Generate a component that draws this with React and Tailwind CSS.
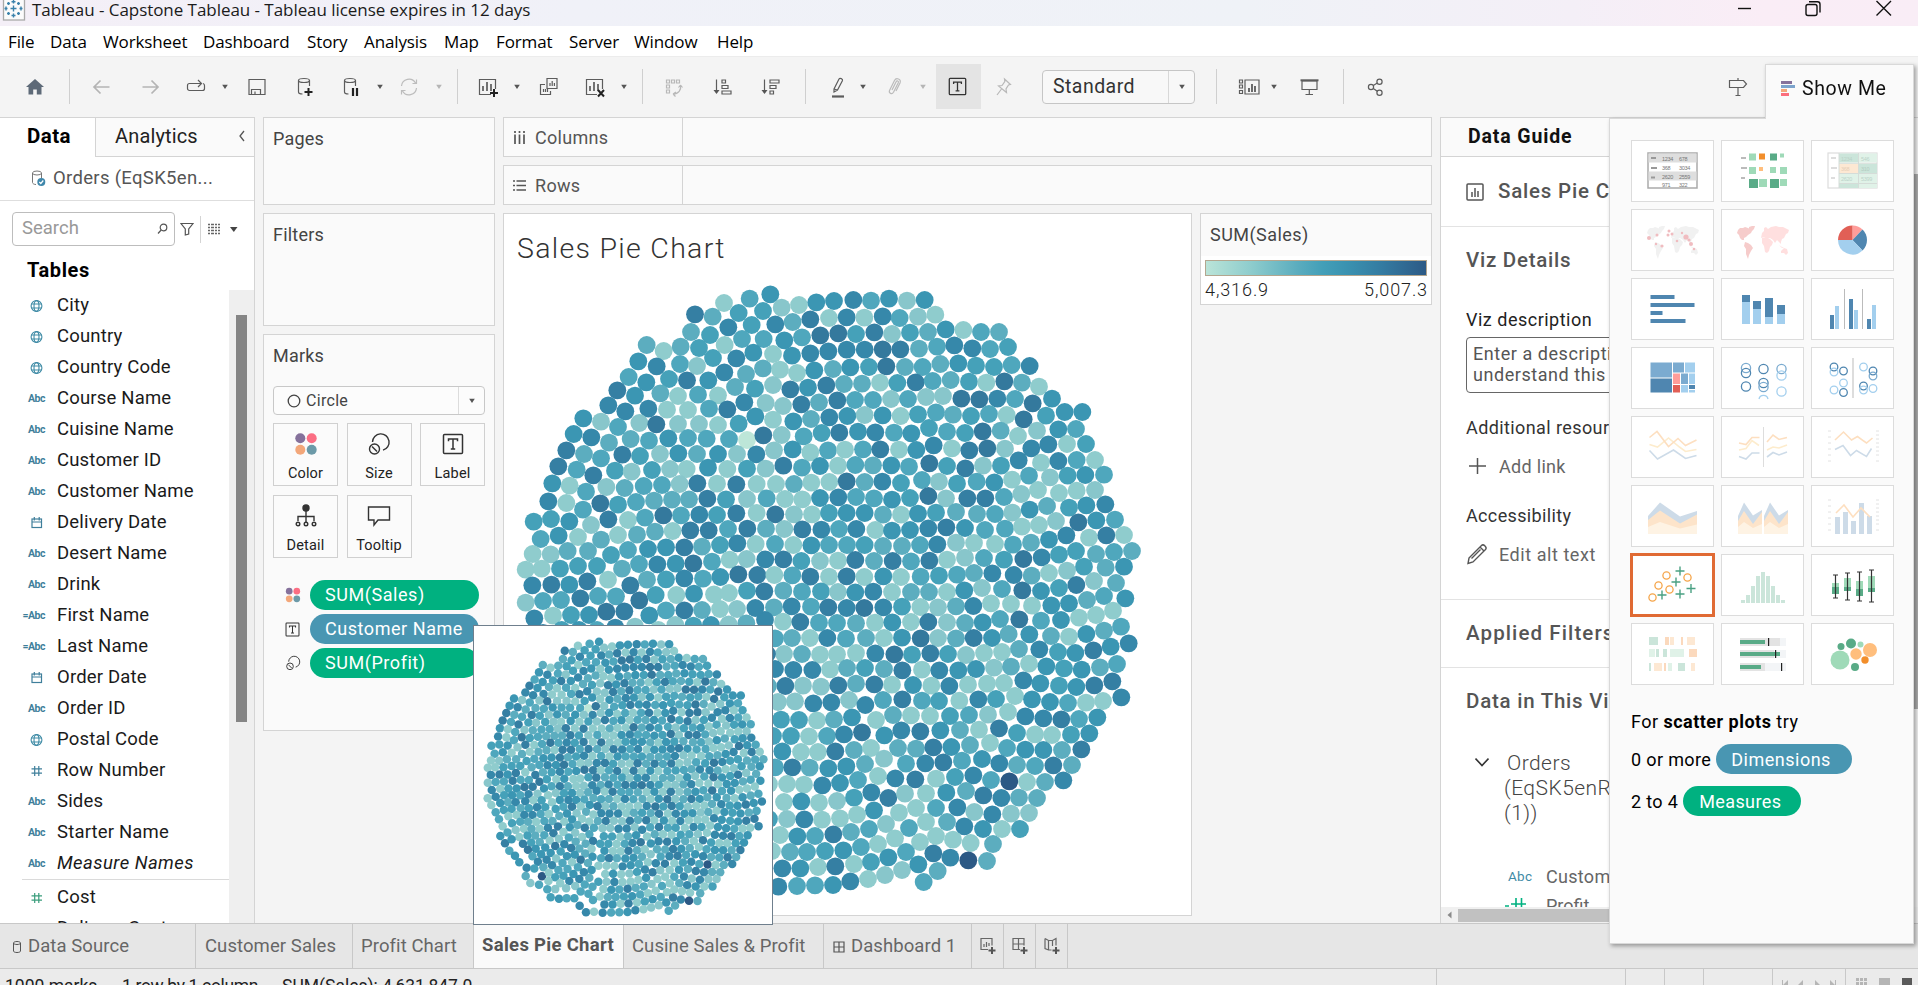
import React from "react";

/* ---------- chart data ---------- */

const PALETTE = {
  a: "#8fcccd", b: "#88c6cb", c: "#5cadbf", d: "#4fa7bd", e: "#45a1b9",
  f: "#3b96b3", h: "#3688aa", i: "#357fa3", j: "#34799d", k: "#2c5985", l: "#bde6d8",
};

const NW = `811,73,f;749,86,d;672,99,a;585,133,i;638,140,c;716,129,e;789,123,e;845,113,b;897,105,a;949,97,f;573,186,c;630,195,e;685,172,h;755,165,e;826,163,h;878,156,c;931,148,i;987,144,a;440,225,c;491,243,a;542,230,c;597,234,e;674,225,a;726,207,d;791,207,d;853,211,f;906,202,d;961,196,j;415,274,f;470,289,h;540,282,d;591,288,b;639,264,e;709,265,h;760,248,f;819,252,a;876,257,f;931,250,h;386,321,d;439,337,f;507,327,e;561,331,i;625,331,f;673,307,h;738,312,c;789,295,c;840,299,a;891,309,a;943,301,f;352,361,i;405,377,f;481,370,c;534,378,a;594,374,d;654,376,a;705,351,c;765,356,e;819,345,b;871,358,i;924,353,f;325,406,h;376,424,h;445,416,h;501,419,a;564,420,a;627,416,d;682,418,i;733,397,h;797,399,b;849,408,b;904,403,i;957,397,c;250,445,f;303,455,b;354,471,d;418,459,b;469,463,j;534,462,b;597,462,b;654,465,a;716,461,e;766,439,f;819,449,a;880,454,f;933,447,c;221,492,f;274,502,h;327,518,c;392,507,c;447,512,d;505,505,f;564,504,d;620,506,d;687,507,d;741,510,l;790,496,j;845,495,b;911,499,d;199,541,i;252,552,c;303,565,d;367,554,i;420,558,e;480,552,b;535,550,f;591,552,c;654,552,f;711,552,b;769,553,h;822,541,b;878,538,f;931,547,a;175,589,i;230,599,d;280,616,i;345,602,e;395,605,b;456,600,e;510,597,b;560,597,a;624,593,f;682,597,a;741,596,e;797,596,b;850,587,i;906,593,d;157,640,f;209,647,a;258,665,d;319,651,b;374,654,c;431,648,d;486,645,d;539,642,b;592,640,i;651,641,a;709,643,i;770,642,a;828,642,a;882,642,c;934,638,a;145,694,h;199,699,a;249,719,d;301,700,j;354,704,e;408,696,d;462,692,c;516,689,c;567,688,c;622,686,i;678,688,e;741,687,b;800,685,d;855,687,a;907,688,a;101,755,e;153,747,e;208,754,f;273,765,b;325,748,i;384,750,a;435,743,d;490,736,j;543,736,d;598,734,h;651,735,e;709,730,i;770,729,a;826,733,j;882,733,b;936,733,a;122,807,d;176,797,f;234,801,a;303,809,c;354,795,a;411,794,c;465,785,c;518,783,a;571,781,i;626,781,i;684,777,d;742,776,i;798,776,c;853,777,b;907,778,i;98,852,a;152,853,b;203,843,c;264,843,c;333,855,e;384,840,d;444,837,f;498,832,f;553,832,i;606,830,c;660,825,e;712,820,h;767,822,a;825,822,d;880,825,a;934,826,f;77,899,a;125,896,a;180,896,e;234,888,e;291,888,e;366,896,c;417,882,d;472,883,h;527,881,f;580,880,j;636,875,d;689,869,a;740,867,b;796,868,h;850,868,i;904,873,e;97,946,h;154,944,i;208,944,f;262,934,i;324,929,a;391,946,i;441,929,c;498,928,e;553,925,h;609,926,d;661,921,f;715,913,j;772,915,i;823,915,a;877,916,d;931,920,i;77,998,b;129,993,d;183,990,d;241,985,i;294,978,d;348,979,d;418,991,j;467,975,e;529,975,a;582,971,f;642,973,a;687,969,a;741,962,e;793,964,i;850,962,c;906,965,d`;

const NE = `42,93,f;100,90,h;153,92,d;207,86,f;261,92,b;314,90,f;27,143,a;80,142,h;133,143,a;188,139,h;239,144,d;294,140,b;346,134,a;0,196,j;55,190,j;108,192,e;163,187,i;216,192,b;270,188,e;324,186,c;377,178,f;430,180,a;483,186,d;537,186,c;25,244,h;80,239,h;134,239,h;188,238,j;241,238,i;297,236,c;351,230,d;403,226,h;457,235,h;510,237,d;564,231,e;39,297,c;91,292,f;147,291,e;199,289,j;255,291,c;308,291,d;361,282,c;415,280,f;468,287,e;522,291,e;575,285,d;629,288,h;19,346,i;72,342,c;126,341,c;180,338,a;232,339,e;287,337,i;338,333,d;392,330,c;447,335,e;499,338,a;553,334,j;606,338,c;657,350,a;52,391,i;105,390,d;159,390,d;213,387,b;264,387,d;318,381,b;369,378,b;424,386,j;478,388,j;532,386,h;585,387,d;638,400,j;696,386,f;28,442,h;82,438,f;134,435,b;188,436,f;242,438,a;294,433,e;348,427,d;399,434,c;453,438,e;507,432,d;560,435,a;611,448,j;678,437,e;734,426,f;787,426,f;5,489,e;58,488,i;114,485,f;166,487,h;222,488,d;274,490,f;327,474,e;381,485,d;435,489,e;488,484,j;542,482,c;594,498,a;651,482,b;715,478,f;768,477,d;24,541,d;75,539,a;129,538,d;181,538,i;237,539,a;289,540,f;341,526,h;396,535,a;448,541,i;502,535,j;555,536,b;634,535,h;685,523,h;741,522,a;798,522,e;0,588,f;54,587,a;106,585,d;159,586,c;214,586,f;267,590,d;328,580,j;381,588,e;436,595,i;489,587,b;543,587,e;596,571,h;663,578,a;715,573,h;770,570,d;825,570,a;28,636,a;80,634,j;134,636,c;187,635,h;243,639,e;306,630,d;357,635,b;411,641,e;470,635,d;523,637,f;576,629,a;627,617,d;690,622,b;743,617,e;796,615,f;852,614,d;0,684,f;55,682,h;108,681,d;162,685,d;216,689,f;270,684,e;325,678,j;378,685,b;442,685,i;496,685,i;552,681,d;604,672,b;654,660,a;717,669,a;770,662,a;825,660,b;27,729,e;80,729,f;134,729,f;189,734,c;243,734,a;294,731,f;348,728,e;408,726,c;471,732,c;525,732,d;577,728,b;629,719,f;681,708,c;747,713,e;799,706,f;856,703,h;4,779,h;57,777,d;109,777,h;166,780,a;216,782,f;270,780,f;325,775,h;379,772,i;435,774,f;495,780,d;555,776,d;606,770,a;657,765,a;708,753,b;775,757,j;829,751,f;885,749,d;27,825,d;81,825,d;134,825,e;189,828,c;246,828,c;300,825,d;352,823,h;408,818,b;462,819,a;525,822,a;579,824,d;633,818,c;687,809,f;739,796,h;807,803,a;859,796,i;912,795,a;0,873,b;54,872,a;106,870,i;162,873,c;218,873,i;273,874,d;328,872,i;381,869,a;435,863,b;492,864,d;552,869,e;610,867,j;665,862,h;717,854,e;768,843,e;828,852,c;882,846,d;936,843,c;27,920,a;80,919,i;133,921,a;190,919,f;243,921,a;302,920,d;357,917,e;411,914,d;462,909,c;517,910,h;581,915,h;635,917,c;687,909,a;741,902,b;792,890,e;857,893,c;912,890,f;3,964,e;54,966,b;106,967,f;160,965,h;216,966,a;273,966,c;327,966,c;381,966,a;433,961,f;486,954,b;546,957,d;607,961,j;663,963,f;717,954,e;769,945,i;822,933,b;888,939,c`;

const SE = `27,52,c;80,49,h;138,50,d;190,52,i;245,54,h;298,54,j;355,52,h;411,50,e;466,51,a;519,52,b;573,49,c;625,48,h;678,40,a;738,42,a;801,47,a;859,46,f;912,40,f;966,30,c;1017,18,d;1081,25,f;0,90,h;54,95,a;106,96,i;162,98,d;216,99,d;273,100,c;330,98,a;382,97,f;438,96,a;490,96,i;546,97,b;600,99,c;653,97,f;705,87,d;763,88,j;828,92,d;888,90,f;942,83,a;993,75,a;1044,62,a;30,145,d;81,144,c;135,144,a;187,144,h;243,146,d;303,144,c;357,144,a;411,143,f;467,145,j;519,144,b;573,145,c;626,144,i;681,144,f;731,132,c;793,133,f;858,138,c;912,140,a;964,132,f;1017,122,c;1068,110,d;57,192,b;111,192,c;165,194,a;216,193,a;273,189,a;331,190,h;388,193,j;441,194,e;496,190,i;549,192,e;603,195,b;657,189,a;711,186,a;762,177,c;823,178,h;879,186,e;931,189,f;985,181,i;1037,170,f;1091,160,h;30,237,h;85,240,h;142,240,h;195,238,a;246,234,c;300,234,e;357,237,c;412,241,i;471,239,a;523,241,h;580,241,f;633,237,f;687,233,b;738,230,c;792,221,a;844,229,f;897,235,e;950,239,f;1005,232,c;1056,222,d;61,288,i;114,287,b;168,290,b;220,286,i;273,281,c;328,283,i;381,284,a;444,285,f;499,287,a;553,288,h;609,284,a;666,281,a;717,279,a;775,271,h;826,280,f;882,287,e;934,291,f;988,286,i;1042,274,i;39,336,b;90,334,b;145,340,h;199,337,h;252,330,b;301,345,h;354,330,d;412,328,i;471,332,d;522,333,e;583,332,a;640,328,h;693,327,e;750,318,a;801,328,f;855,336,f;909,339,d;963,338,a;1014,333,a;1069,322,h;48,389,e;102,390,e;156,391,a;207,388,c;261,382,f;333,390,a;384,375,c;438,376,a;495,378,a;555,378,e;612,375,d;669,374,b;729,366,a;781,379,h;835,385,h;889,388,i;942,387,d;997,382,f;24,438,e;78,438,e;132,439,a;186,438,d;237,433,h;291,427,j;358,436,f;409,421,h;466,424,i;526,421,f;585,420,c;642,419,a;702,415,i;756,429,e;810,433,a;861,435,a;918,434,e;973,430,f;52,484,f;108,486,a;159,486,a;211,484,i;267,480,c;318,474,a;399,474,c;453,476,c;505,472,i;559,471,f;615,465,c;675,459,a;726,474,d;781,479,f;835,480,f;891,480,c;949,478,i;30,532,d;82,532,i;134,533,c;190,535,f;244,529,f;300,522,c;357,506,b;423,521,d;481,520,h;535,517,i;591,512,d;651,507,f;703,520,h;756,525,c;810,528,d;865,526,i;921,525,c;12,582,a;66,582,a;117,584,a;172,586,h;225,579,f;279,570,d;339,558,a;391,565,h;451,568,i;513,566,a;570,561,e;625,556,h;678,570,d;733,574,k;786,576,a;840,576,c;895,571,h;57,636,a;109,634,f;162,638,a;216,633,b;267,623,e;319,607,h;370,624,i;420,611,b;483,610,a;544,608,f;603,603,c;655,616,i;709,624,h;762,623,c;816,624,c;12,687,e;66,687,b;118,688,h;171,689,a;225,685,a;276,674,a;327,661,f;402,668,a;453,654,a;513,654,d;577,652,h;628,666,b;682,673,h;738,671,b;792,669,b;45,735,a;97,739,f;150,738,d;205,733,i;258,726,c;312,717,d;363,702,b;432,714,d;483,696,a;546,696,c;598,709,h;654,717,f;711,717,a;765,717,e;21,783,a;75,786,c;126,786,d;180,783,e;235,781,f;288,771,d;339,762,a;390,745,a;465,756,a;513,738,a;564,749,a;617,759,a;684,762,c;52,835,h;106,835,f;159,831,a;211,829,i;267,822,a;318,816,e;370,802,f;423,786,d;505,790,i;556,803,h;610,811,k;666,813,c;40,890,h;96,888,d;150,886,d;204,885,f;256,874,h;309,867,a;360,855,b;411,840,b;460,823,f;518,843,c;476,876,d`;

const W = `193,100,h;249,92,a;303,90,e;357,90,f;409,80,j;463,79,i;538,91,f;588,76,d;643,76,i;696,75,c;750,72,a;801,72,b;856,69,h;558,30,d;618,29,a;671,27,f;726,27,a;777,25,a;832,20,e;883,19,i;275,135,e;436,128,h;495,125,b;565,135,a;616,120,b;670,122,e;723,120,f;776,118,b;829,115,c;883,112,i`;

const SW_EDGE = `53,640,a;64,660,a;77,682,d;87,703,d;98,724,a;91,753,f;105,775,i;118,797,d;135,812,f;148,832,f;170,848,h;167,873,c;181,894,b;207,899,d;232,913,d;242,937,e;267,941,f;290,940,d;313,940,e;329,962,h;348,982,h;372,980,a`;

// Thumbnail scale and the point both views share.
const TX = 0.4545, TY = 0.4576, OX = 770.3, OY = 294.3, PX = 599, PY = 641.7;

const read = (s, ox, oy) =>
  s.split(";").map((p) => {
    const [x, y, c] = p.split(",");
    return [ox + x / 3, oy + y / 3, c];
  });

function buildMarks() {
  const marks = [];
  const free = (x, y, d) => {
    for (const m of marks) {
      const dx = m[0] - x, dy = m[1] - y;
      if (dx * dx + dy * dy < d * d) return false;
    }
    return true;
  };
  const add = (list, d) => list.forEach((m) => free(m[0], m[1], d) && marks.push(m));
  add(read(NW, 500, 270), 12);
  add(read(NE, 820, 270), 12);
  add(read(SE, 765, 590), 12);
  add(read(W, 470, 585), 12);
  const toMain = ([x, y, c]) => [OX + (x - PX) / TX, OY + (y - PY) / TY, c];
  const edge = read(SW_EDGE, 470, 585).map(toMain);
  add(edge, 12);
  add([[470 + 216 / 3, 585 + 874 / 3, "k"]].map(toMain), 12);
  const poly = [...edge, [780, 888], [800, 620], [540, 618]];
  const inside = (x, y) => {
    let r = false;
    for (let i = 0, j = poly.length - 1; i < poly.length; j = i++) {
      const [xi, yi] = poly[i], [xj, yj] = poly[j];
      if (yi > y !== yj > y && x < ((xj - xi) * (y - yi)) / (yj - yi) + xi) r = !r;
    }
    return r;
  };
  const mix = "aaababbcccddddeeeffffhhhiij";
  let seed = 11;
  for (let y = 618; y < 890; y += 1)
    for (let x = 520; x < 800; x += 1)
      if (inside(x, y) && free(x, y, 16.9)) {
        seed = (seed * 1103515245 + 12345) % 2147483648;
        marks.push([x, y, mix[Math.floor((seed / 2147483648) * mix.length)]]);
      }
  return marks;
}

const MARKS = buildMarks();

/* ---------- icons ---------- */

const Svg = ({ w = 30, h = 30, children, className = "" }) => (
  <svg width={w} height={h} viewBox={`0 0 ${w} ${h}`} fill="none" stroke="#5c5c5c" strokeWidth="1.2" className={"shrink-0 " + className}>
    {children}
  </svg>
);

const Caret = ({ className = "", fill = "#555" }) => (
  <svg width="8" height="6" viewBox="0 0 8 6" className={"shrink-0 " + className}>
    <path d="M1.2 .8h5.6L4 4.900z" fill={fill} />
  </svg>
);

const Sep = ({ className = "" }) => <div className={"h-[35px] w-px shrink-0 bg-[#cfcfcf] " + className} />;

const Cylinder = () => (
  <>
    <ellipse cx="14" cy="8.5" rx="5.5" ry="2" />
    <path d="M8.500 8.500V20c0 1.300 1.500 2 4 2M19.500 8.500V14" />
  </>
);

const Dots = ({ s = 24 }) => (
  <svg width={s} height={s} viewBox="0 0 24 24" className="shrink-0">
    <circle cx="6.300" cy="6.300" r="5" fill="#85719b" />
    <circle cx="17.700" cy="6.300" r="5" fill="#fb6e83" />
    <circle cx="6.300" cy="17.700" r="5" fill="#f3a77a" />
    <circle cx="17.700" cy="17.700" r="5" fill="#6c9aa8" />
  </svg>
);

const SizeIcon = ({ s = 24 }) => (
  <svg width={s} height={s} viewBox="0 0 24 24" fill="none" stroke="#333" strokeWidth="1.400" className="shrink-0">
    <path d="M5.500 10A8.300 8.300 0 1 1 16 18.200" />
    <circle cx="7.500" cy="17" r="5" />
    <path d="M5 14.500l5 5" />
  </svg>
);

const LabelIcon = ({ s = 22 }) => (
  <svg width={s} height={s} viewBox="0 0 22 22" fill="none" stroke="#333" strokeWidth="1.500" className="shrink-0">
    <rect x="1.500" y="1.500" width="19" height="19" rx="1" />
    <path d="M6.500 8.200V6h9v2.200M11 6v10M8.800 16h4.400" />
  </svg>
);

const FieldIcon = ({ kind }) => {
  if (kind === "abc" || kind === "=abc")
    return (
      <span className="flex w-[19px] shrink-0 justify-end text-[10.500px] font-bold tracking-[-0.500px] text-[#3f7f9b]">
        {kind === "abc" ? "Abc" : "=Abc"}
      </span>
    );
  if (kind === "geo")
    return (
      <svg width="19" height="14" viewBox="0 0 19 14" fill="none" stroke="#3f8ba6" strokeWidth="1.1" className="shrink-0">
        <circle cx="10.500" cy="7" r="5.400" />
        <ellipse cx="10.500" cy="7" rx="2.500" ry="5.400" />
        <path d="M5.600 5h9.800M5.600 9h9.800" />
      </svg>
    );
  if (kind === "date")
    return (
      <svg width="19" height="14" viewBox="0 0 19 14" fill="none" stroke="#3f7f9b" strokeWidth="1.2" className="shrink-0">
        <rect x="6" y="3" width="9.500" height="8.500" />
        <path d="M6 6h9.500M8.300 1v3.500M13.200 1v3.500" />
      </svg>
    );
  return (
    <svg width="19" height="14" viewBox="0 0 19 14" fill="none" stroke={kind === "num" ? "#3f7f9b" : "#3a9d7c"} strokeWidth="1.2" className="shrink-0">
      <path d="M5.500 4.800H16M5.500 9.200H16M8.700 2v10M12.800 2v10" />
    </svg>
  );
};

/* ---------- top bars ---------- */

const TitleBar = () => (
  <div className="flex h-[26px] items-start bg-[linear-gradient(90deg,#f4eff7_0%,#f0f1f8_30%,#eff2f7_65%,#f4eff7_82%,#faedf6_92%,#f9edf6_100%)]">
    <svg width="26" height="22" viewBox="0 0 26 22" className="shrink-0">
      <rect x="3.500" y="-6" width="21" height="26" fill="#fbfbfb" stroke="#a9a9a9" strokeWidth="1.300" />
      <g stroke="#3b82ab" strokeWidth="1.400">
        <path d="M13.500 5.500v6M10.500 8.500h6M13.500 0v3.500M11.500 1.800h4M13.500 13.500v4M11.500 15.500h4M6 6.500v4M4.500 8.500h3M21 6.500v4M19.500 8.500h3M8.500 2v3M7 3.500h3M18.500 2v3M17 3.500h3M8.500 12v3M7 13.500h3M18.500 12v3M17 13.500h3" />
      </g>
    </svg>
    <div className="ml-[6px] font-['Open_Sans','Noto_Sans',sans-serif] text-[17px] leading-5 tracking-[-0.050px] text-[#1b1b1b]">
      Tableau - Capstone Tableau - Tableau license expires in 12 days
    </div>
    <svg width="180" height="22" viewBox="0 0 180 22" fill="none" stroke="#111" strokeWidth="1.400" className="ml-auto shrink-0">
      <path d="M-2 8.500H13" />
      <rect x="68" y="4.500" width="11" height="11" rx="2" />
      <path d="M71 1.700h8.500a2.500 2.500 0 0 1 2.500 2.500V12.500" />
      <path d="M138.500 1l14.500 14.500M153 1l-14.500 14.500" />
    </svg>
  </div>
);

const MENU = [
  ["File", "w-[42px]"], ["Data", "w-[53px]"], ["Worksheet", "w-[100px]"], ["Dashboard", "w-[104px]"],
  ["Story", "w-[57px]"], ["Analysis", "w-[80px]"], ["Map", "w-[52px]"], ["Format", "w-[73px]"],
  ["Server", "w-[65px]"], ["Window", "w-[83px]"], ["Help", "w-[50px]"],
];

const MenuBar = () => (
  <div className="flex h-[30px] items-center bg-white pb-px pl-2 pt-[3px] font-['Open_Sans','Noto_Sans',sans-serif] text-[17px] tracking-[-0.120px] text-black">
    {MENU.map(([t, w]) => (
      <div key={t} className={"shrink-0 whitespace-nowrap " + w}>{t}</div>
    ))}
  </div>
);

const MiniBars = ({ x = 0, y = 0 }) => <path d={`M${x} ${y}v-5M${x + 4} ${y}v-9M${x + 8} ${y}v-7`} strokeWidth="1.700" />;

const Toolbar = () => (
  <div className="flex h-[61px] shrink-0 items-center border-t border-[#ececec] bg-[#f4f4f4] pb-px pl-5">
    <svg width="30" height="30" viewBox="0 0 30 30" className="shrink-0">
      <path d="M15 7l9 8h-2.500v7.500h-4.700v-5h-3.600v5H8.500V15H6z" fill="#5e6a78" />
    </svg>
    <Sep className="ml-[19px]" />
    <Svg className="ml-[17px]"><path d="M22.500 15H7.500M13.500 8.500L7 15l6.500 6.500" stroke="#b4b4b4" strokeWidth="1.700" /></Svg>
    <Svg className="ml-[18px]"><path d="M7.500 15h15M16.500 8.500L23 15l-6.500 6.500" stroke="#b4b4b4" strokeWidth="1.700" /></Svg>
    <Svg className="ml-4"><path d="M17 18.500H8.500a2 2 0 0 1-2-2v-3a2 2 0 0 1 2-2H20M22 11.500a2 2 0 0 1 1.500 2v3a2 2 0 0 1-2 2H17M17 8l3.500 3.500L17 15" /></Svg>
    <Caret className="ml-[10px]" />
    <Svg className="ml-[13px]"><path d="M7 7.500h16v15H7zM9.500 22v-4.500h9V22M13 19.500V22" /></Svg>
    <Svg className="ml-[18px]"><Cylinder /><path d="M14.500 20h8M18.500 16v8" stroke="#222" strokeWidth="2" /></Svg>
    <Svg className="ml-4"><Cylinder /><path d="M17 16v8M21 16v8" stroke="#222" strokeWidth="2.200" /></Svg>
    <Caret className="ml-[10px]" />
    <Svg className="ml-[10px]"><path d="M7.500 14a7.500 7.500 0 0 1 14-3M22.500 16a7.500 7.500 0 0 1-14 3M22.500 7.500v4h-4M7.500 22.500v-4h4" stroke="#bcbcbc" /></Svg>
    <Caret className="ml-[11px]" fill="#b5b5b5" />
    <Sep className="ml-[14px]" />
    <Svg className="ml-[15px]"><path d="M18 22.500H6.500v-15h16V17" /><MiniBars x={10} y={19} /><path d="M17 21h8M21 17v8" stroke="#222" strokeWidth="2" /></Svg>
    <Caret className="ml-[10px]" />
    <Svg className="ml-[13px]"><path d="M13 13V6.500h10v10H13zM16 14v-3M18.200 14V9M20.400 14v-3M11 12.500H6.500v10h10V19M9.500 20v-3M11.500 20v-3M13.500 20v-3" /></Svg>
    <Svg className="ml-4"><path d="M17 22.500H6.500v-15h16V17" /><MiniBars x={10} y={19} /><path d="M18 18l6 6.500M24 18l-6 6.500" stroke="#222" strokeWidth="2" /></Svg>
    <Caret className="ml-[10px]" />
    <Sep className="ml-[14px]" />
    <Svg className="ml-4"><path d="M7.500 8h3v3h-3zM12.500 8h3v3h-3zM17.500 8h3v3h-3zM7.500 13h3v3h-3zM7.500 18h3v3h-3zM21.500 13c1 5-2 9-7.500 9M14 22l3-2M14 22l2.500 2.500M21.500 13l-2 2.500M21.500 13l2 2.500" stroke="#b8b8b8" /></Svg>
    <Svg className="ml-[19px]"><path d="M8.500 7.500v13M14 8h3.500v3H14zM14 13.500h6v3h-6zM14 19h9v3h-9z" /><path d="M5.500 18h6l-3 4z" fill="#555" stroke="none" /></Svg>
    <Svg className="ml-[18px]"><path d="M8.500 7.500v13M14 8h9v3h-9zM14 13.500h6v3h-6zM14 19h3.500v3H14z" /><path d="M5.500 18h6l-3 4z" fill="#555" stroke="none" /></Svg>
    <Sep className="ml-[19px]" />
    <Svg className="ml-[17px]"><path d="M11 17l5-10c1-1.500 4 0 3.500 1.500l-5 9.500-3.500 2zM11 17l3.500 1" /><path d="M9 24.500h12" strokeWidth="2.200" /></Svg>
    <Caret className="ml-[6px]" />
    <Svg className="ml-[13px]"><path d="M12 18l4-8c1-2 3-1 2.300.800l-4.800 9.500c-1.500 2.500-5 1-4-1.800L14.500 8.500c1.700-3.500 7-1.500 5.500 2.500L16 19" stroke="#bbb" /></Svg>
    <Caret className="ml-[9px]" fill="#b5b5b5" />
    <div className="ml-[9px] flex h-[45px] w-[45px] shrink-0 items-center justify-center bg-[#e4e4e4] pr-[2px]"><LabelIcon s={19} /></div>
    <Svg className="ml-[7px]"><path d="M16.500 7l6 5.500-2 .5-2.500 4 .500 3.500-8-6.500 3.500-.5 2.800-4zM13.500 17L9 23" stroke="#b8b8b8" /></Svg>
    <div className="ml-6 flex h-[34px] w-[153px] shrink-0 items-center rounded-sm border border-[#c6c6c6] bg-[#f8f8f8] text-[19.500px] tracking-[0.450px] text-[#333]">
      <span className="grow pl-[10px]">Standard</span>
      <span className="flex h-full w-[26px] items-center justify-center border-l border-[#d8d8d8]"><Caret /></span>
    </div>
    <Sep className="ml-[21px]" />
    <Svg className="ml-[17px]"><path d="M5.500 8h3v3h-3zM5.500 13h3v3h-3zM5.500 18.500h3v3h-3zM11 8h14v14H11z" /><path d="M15 20v-4M18 20v-8M21 20v-6" strokeWidth="1.800" /></Svg>
    <Caret className="ml-[6px]" />
    <Svg className="ml-4"><path d="M8 9h15v8.500H8zM15.300 17.500v5M11.500 22.500h7.500" /><path d="M6.500 8.300h18" strokeWidth="2" /></Svg>
    <Sep className="ml-[19px]" />
    <Svg className="ml-[17px]"><circle cx="10" cy="15" r="2.600" /><circle cx="18.500" cy="9.700" r="2.600" /><circle cx="18.500" cy="20.700" r="2.600" /><path d="M12.300 13.600l4-2.500M12.300 16.400l4 2.800" /></Svg>
    <Svg className="ml-[332px]"><path d="M6.500 8.500h14l3 3.500-3 3.500h-14zM15 6v2.500M15 15.500V23M12.500 23.500h5" /></Svg>
  </div>
);

/* ---------- data pane ---------- */

const FIELDS = [
  ["geo", "City"], ["geo", "Country"], ["geo", "Country Code"], ["abc", "Course Name"], ["abc", "Cuisine Name"],
  ["abc", "Customer ID"], ["abc", "Customer Name"], ["date", "Delivery Date"], ["abc", "Desert Name"], ["abc", "Drink"],
  ["=abc", "First Name"], ["=abc", "Last Name"], ["date", "Order Date"], ["abc", "Order ID"], ["geo", "Postal Code"],
  ["num", "Row Number"], ["abc", "Sides"], ["abc", "Starter Name"],
];

const Field = ({ kind, children, italic }) => (
  <div className="flex h-[31px] shrink-0 items-center pl-[26px] text-[18.500px] tracking-[0.180px] text-[#1a1a1a]">
    <FieldIcon kind={kind} />
    <span className={"ml-3 whitespace-nowrap " + (italic ? "tracking-[0.450px] italic" : "")}>{children}</span>
  </div>
);

const DataPane = () => (
  <div className="flex w-[255px] shrink-0 flex-col overflow-hidden border-r border-t border-[#d4d4d4] bg-white">
    <div className="flex h-[39px] shrink-0 text-[20px]">
      <div className="w-[95px] pl-[27px] pt-[3px] text-[20.500px] font-bold leading-[30px] tracking-[0.450px] text-black">Data</div>
      <div className="flex grow items-start justify-between border-b border-l border-[#d4d4d4] bg-[#fafafa] pl-[19px] pr-2 pt-[3px] leading-[30px] text-[#222]">
        <span className="tracking-[0.150px]">Analytics</span>
        <svg width="8" height="12" viewBox="0 0 8 12" fill="none" stroke="#555" strokeWidth="1.300" className="mt-[9px]"><path d="M6 1L2 6l4 5" /></svg>
      </div>
    </div>
    <div className="flex h-[44px] shrink-0 items-center border-b border-[#dedede] pl-[31px]">
      <svg width="15" height="17" viewBox="0 0 15 17" fill="none" stroke="#777" className="shrink-0">
        <ellipse cx="6" cy="3" rx="4.500" ry="2" /><path d="M1.500 3v9.500c0 1 1.500 2 3.500 2M10.500 3v5" />
        <circle cx="10.300" cy="12" r="4" fill="#3f87ab" stroke="none" /><path d="M8.300 12l1.500 1.500 2.500-3" stroke="#fff" strokeWidth="1.200" />
      </svg>
      <span className="ml-[7px] whitespace-nowrap text-[18.500px] tracking-[0.320px] text-[#555]">Orders (EqSK5en...</span>
    </div>
    <div className="mt-[11px] flex h-[34px] shrink-0 items-center pl-3">
      <div className="flex h-[34px] w-[163px] items-center justify-between rounded-sm border border-[#bdbdbd] pl-[9px] pr-[6px] text-[18.500px] text-[#999]">
        Search
        <svg width="11" height="12" viewBox="0 0 11 12" fill="none" stroke="#555" strokeWidth="1.200"><circle cx="6.500" cy="4.500" r="3.300" /><path d="M4.200 7L1 10.500" /></svg>
      </div>
      <svg width="14" height="14" viewBox="0 0 14 14" fill="none" stroke="#555" strokeWidth="1.200" className="ml-[5px]"><path d="M1 1.500h12L8.700 7v5L5.300 13V7z" /></svg>
      <div className="ml-[6px] h-[27px] w-px bg-[#d4d4d4]" />
      <svg width="13" height="12" viewBox="0 0 13 12" fill="none" stroke="#666" className="ml-[7px]"><path d="M0 1.500h2M3 1.500h3M7 1.500h2M10 1.500h2M0 4.500h2M3 4.500h3M7 4.500h2M10 4.500h2M0 7.500h2M3 7.500h3M7 7.500h2M10 7.500h2M0 10.500h2M3 10.500h3M7 10.500h2M10 10.500h2" strokeWidth="1.500" /></svg>
      <svg width="10" height="7" viewBox="0 0 10 7" className="ml-[8px]"><path d="M1 1h7.500L4.800 6z" fill="#444" /></svg>
    </div>
    <div className="h-[44px] shrink-0 pl-[27px] pt-2 text-[20px] font-bold leading-[32px] tracking-[0.600px] text-black">Tables</div>
    <div className="flex min-h-0 grow">
      <div className="flex w-[229px] shrink-0 flex-col overflow-hidden">
        {FIELDS.map(([k, t]) => <Field key={t} kind={k}>{t}</Field>)}
        <Field kind="abc" italic>Measure Names</Field>
        <div className="ml-[22px] h-px shrink-0 bg-[#dadada]" />
        <div className="h-[2px] shrink-0" />
        <Field kind="measure">Cost</Field>
        <Field kind="measure">Delivery Cost</Field>
      </div>
      <div className="flex grow flex-col bg-[#efefef] pl-[7px] pt-[25px]">
        <div className="h-[407px] w-[11px] bg-[#858585]" />
      </div>
    </div>
  </div>
);

/* ---------- shelves and marks ---------- */

const CARD = "border border-[#d4d4d4] bg-[#fafafa]";
const CARD_TITLE = "pl-[9px] text-[18px] tracking-[0.200px] text-[#444]";

const MarkButton = ({ label, children }) => (
  <div className="flex h-[63px] w-[65px] flex-col items-center justify-between border border-[#d0d0d0] bg-[#fbfbfb] pb-[3px] pt-[8px]">
    <div className="flex h-6 items-center">{children}</div>
    <div className="text-[14.500px] leading-4 tracking-[0.150px] text-[#222]">{label}</div>
  </div>
);

const Pill = ({ icon, color, children }) => (
  <div className="flex h-[30px] items-center pl-[12px]">
    <div className="flex w-[34px] items-center pl-[9px]">{icon}</div>
    <div className={"flex h-[30px] w-[169px] items-center whitespace-nowrap rounded-full pl-[15px] text-[18px] tracking-[0.550px] text-white " + color}>{children}</div>
  </div>
);

const MarksColumn = () => (
  <div className="flex w-[232px] shrink-0 flex-col gap-2">
    <div className={"h-[88px] pt-[9px] leading-6 " + CARD}><div className={CARD_TITLE}>Pages</div></div>
    <div className={"h-[113px] pt-[9px] leading-6 " + CARD}><div className={CARD_TITLE}>Filters</div></div>
    <div className={"h-[397px] pt-[9px] leading-6 " + CARD}>
      <div className={CARD_TITLE}>Marks</div>
      <div className="ml-[9px] mt-[18px] flex h-[29px] w-[212px] items-center rounded-sm border border-[#c8c8c8] bg-[#fcfcfc] text-[16px] tracking-[0.300px] text-[#444]">
        <svg width="14" height="14" viewBox="0 0 14 14" fill="none" stroke="#444" strokeWidth="1.300" className="ml-[13px]"><circle cx="7" cy="7" r="5.800" /></svg>
        <span className="ml-[5px] grow">Circle</span>
        <span className="flex h-full w-[26px] items-center justify-center border-l border-[#dcdcdc]"><Caret /></span>
      </div>
      <div className="ml-[9px] mt-[8px] grid w-[212px] grid-cols-[65px_65px_65px] justify-between gap-y-[9px]">
        <MarkButton label="Color"><Dots /></MarkButton>
        <MarkButton label="Size"><SizeIcon /></MarkButton>
        <MarkButton label="Label"><LabelIcon /></MarkButton>
        <MarkButton label="Detail">
          <svg width="22" height="24" viewBox="0 0 22 24" fill="none" stroke="#333" strokeWidth="1.400">
            <circle cx="11" cy="4" r="3" fill="#333" /><path d="M11 6v12M3 17v-4.500h16V17" />
            <circle cx="3" cy="20" r="1.800" /><circle cx="11" cy="20" r="1.800" /><circle cx="19" cy="20" r="1.800" />
          </svg>
        </MarkButton>
        <MarkButton label="Tooltip">
          <svg width="24" height="24" viewBox="0 0 24 24" fill="none" stroke="#333" strokeWidth="1.400"><path d="M1.500 3h21v13H11l-4 5v-5H1.500z" /></svg>
        </MarkButton>
      </div>
      <div className="mt-[22px] flex flex-col gap-1">
        <Pill icon={<Dots s={16} />} color="bg-[#00b180]">SUM(Sales)</Pill>
        <Pill icon={<LabelIcon s={15} />} color="bg-[#4996b2]">Customer Name</Pill>
        <Pill icon={<SizeIcon s={16} />} color="bg-[#00b180]">SUM(Profit)</Pill>
      </div>
    </div>
  </div>
);

const Shelf = ({ label, icon }) => (
  <div className={"flex h-[40px] shrink-0 items-center " + CARD}>
    <div className="flex h-full w-[179px] items-center border-r border-[#d4d4d4] pl-[9px]">
      {icon}
      <span className="ml-[9px] text-[18px] tracking-[0.300px] text-[#555]">{label}</span>
    </div>
  </div>
);

const Chart = () => (
  <svg width="660" height="640" viewBox="504 270 660 640" className="shrink-0">
    {MARKS.map(([x, y, c], n) => <circle key={n} cx={x} cy={y} r="8.900" fill={PALETTE[c]} />)}
  </svg>
);

const Center = () => (
  <div className="flex w-[929px] shrink-0 flex-col gap-2">
    <Shelf label="Columns" icon={<svg width="13" height="13" viewBox="0 0 13 13" stroke="#555" strokeWidth="1.700"><path d="M2 0v2M6.500 0v2M11 0v2M2 3.500V13M6.500 3.500V13M11 3.500V13" /></svg>} />
    <Shelf label="Rows" icon={<svg width="13" height="13" viewBox="0 0 13 13" stroke="#555" strokeWidth="1.700"><path d="M0 2h2M0 6.500h2M0 11h2M3.500 2H13M3.500 6.500H13M3.500 11H13" /></svg>} />
    <div className="flex items-start gap-2">
      <div className="flex h-[703px] w-[689px] flex-col overflow-hidden border border-[#d4d4d4] bg-white">
        <div className="h-[56px] shrink-0 pl-[13px] pt-[17px] text-[28.500px] font-light leading-[36px] tracking-[1.300px] text-[#333]">Sales Pie Chart</div>
        <Chart />
      </div>
      <div className="flex h-[92px] grow flex-col border border-[#d4d4d4] bg-white">
        <div className="h-[42px] bg-[#fafafa] pl-[9px] pt-[9px] text-[18px] leading-6 tracking-[0.450px] text-[#444]">SUM(Sales)</div>
        <div className="mx-1 mt-1 h-4 border border-[#b3a68f] bg-[linear-gradient(90deg,#bae4d8_0%,#8fcdcd_20%,#5aacbe_42%,#439fb8_53%,#3a92b0_64%,#347ba1_80%,#2d5a86_100%)]" />
        <div className="flex justify-between pl-1 pr-[3px] pt-[2px] text-[18px] font-light leading-6 tracking-[0.900px] text-[#222]">
          <span>4,316.9</span><span>5,007.3</span>
        </div>
      </div>
    </div>
  </div>
);

/* ---------- data guide ---------- */

const DataGuide = () => (
  <div className="flex w-[478px] shrink-0 flex-col border-l border-t border-[#d4d4d4] bg-white">
    <div className="flex min-h-0 grow">
      <div className="flex h-[789px] w-[473px] shrink-0 flex-col overflow-hidden whitespace-nowrap">
        <div className="flex h-[39px] shrink-0 items-center border-b border-[#d4d4d4] bg-[#fafafa] pl-[27px] text-[19.500px] font-bold tracking-[0.850px] text-[#111]">Data Guide</div>
        <div className="flex h-[70px] shrink-0 items-center border-b border-[#e3e3e3] pl-[25px]">
          <svg width="18" height="18" viewBox="0 0 18 18" fill="none" stroke="#555" strokeWidth="1.500"><rect x="1" y="1" width="16" height="16" rx="1" /><path d="M6 14V9M9 14V5M12 14V8" /></svg>
          <span className="ml-[14px] text-[20.500px] font-medium tracking-[0.800px] text-[#555]">Sales Pie Chart</span>
        </div>
        <div className="flex h-[66px] shrink-0 items-center pl-[25px] text-[20.500px] font-medium tracking-[0.750px] text-[#555]">Viz Details</div>
        <div className="mt-[15px] h-[29px] shrink-0 pl-[25px] text-[18px] leading-6 tracking-[0.500px] text-[#222]">Viz description</div>
        <div className="ml-[25px] h-[56px] w-[400px] shrink-0 rounded-sm border border-[#666] pl-[6px] pt-[5px] text-[18px] leading-[21px] tracking-[0.550px] text-[#555]">
          Enter a description to help others<br />understand this viz
        </div>
        <div className="mt-[23px] h-6 shrink-0 pl-[25px] text-[18px] leading-6 tracking-[0.400px] text-[#333]">Additional resources</div>
        <div className="mt-[14px] flex h-6 shrink-0 items-center pl-[27px] text-[18px] tracking-[0.300px] text-[#666]">
          <svg width="19" height="18" viewBox="0 0 19 18" stroke="#555" strokeWidth="1.500"><path d="M1 9h17M9.500 1v16" /></svg>
          <span className="ml-[12px]">Add link</span>
        </div>
        <div className="mt-[26px] h-6 shrink-0 pl-[25px] text-[18px] leading-6 tracking-[0.350px] text-[#333]">Accessibility</div>
        <div className="mt-[14px] flex h-6 shrink-0 items-center pl-[25px] text-[18px] tracking-[0.550px] text-[#666]">
          <svg width="22" height="22" viewBox="0 0 22 22" fill="none" stroke="#555" strokeWidth="1.400"><path d="M3 15L15.500 2.500c1-1 2.500-.5 3.500.5s1.500 2.500.5 3.500L7 19l-5 1.500zM5.500 15.500L14.500 6.500M14 4l4 4" /></svg>
          <span className="ml-[11px]">Edit alt text</span>
        </div>
        <div className="mt-[33px] flex h-[69px] shrink-0 items-center border-y border-[#e3e3e3] pl-[25px] text-[20.500px] font-medium tracking-[1.100px] text-[#555]">Applied Filters</div>
        <div className="flex h-[66px] shrink-0 items-center pl-[25px] text-[20.500px] font-medium tracking-[0.750px] text-[#555]">Data in This Viz</div>
        <div className="mt-[17px] flex h-[75px] shrink-0 pl-[34px] text-[21px] leading-[25px] text-[#444]">
          <svg width="14" height="10" viewBox="0 0 14 10" fill="none" stroke="#333" strokeWidth="1.600" className="mt-[6px]"><path d="M.5 1.500L7 8.500l6.500-7" /></svg>
          <div className="ml-[15px] font-light tracking-[0.450px]"><span className="pl-[3px]">Orders</span><br />(EqSK5enRZx<br />(1))</div>
        </div>
        <div className="mt-[38px] flex h-6 shrink-0 items-center pl-[67px] text-[18px] tracking-[0.300px] text-[#666]">
          <span className="w-[38px] text-[13.500px] text-[#3f8ba6]">Abc</span>Customer Name
        </div>
        <div className="mt-[6px] flex h-6 shrink-0 items-start pl-[64px] text-[18px] text-[#666]">
          <svg width="41" height="24" viewBox="0 0 41 24" fill="none" stroke="#00b180" strokeWidth="1.600"><path d="M0 12h4M6 10h15M6 16h15M11 4v16M16.500 4v16" /></svg>
          <span className="leading-6">Profit</span>
        </div>
      </div>
      <div className="flex grow flex-col bg-[#f4f4f4] pt-[56px]"><div className="h-[535px] bg-[#adadad]" /></div>
    </div>
    <div className="flex h-4 shrink-0 items-center bg-[#f0f0f0]">
      <svg width="17" height="12" viewBox="0 0 17 12"><path d="M10.500 2.500v7L6.500 6z" fill="#8a8a8a" /></svg>
      <div className="h-[13px] w-[420px] bg-[#c1c1c1]" />
    </div>
  </div>
);

/* ---------- show me ---------- */

const B = "#4f86b0", LB = "#a3cfee", MB = "#7babd0", G = "#59ab87", LG = "#9fdab8", O = "#f28e2b", LO = "#ffbe7d";
const R = ({ x, y, w, h, f }) => <rect x={x} y={y} width={w} height={h} fill={f} />;
const Rects = ({ d }) => d.map(([x, y, w, h, f], n) => <R key={n} x={x} y={y} w={w} h={h} f={f} />);
const Ring = ({ x, y, s, r = 4.600 }) => <circle cx={x} cy={y} r={r} fill="none" stroke={s} strokeWidth="1.300" />;
const LAND_W = "M17 21l2-2 3 0 2-1 3 1 2 1 2 2-1 2-3 2-2 2-2 1 0 2-2 0-2-2-1-3-2-2zM24 33l3 1 3 2 2 3-2 3-2 4-1 4-2-5 0-5-2-3zM28 18l3-1 3 0-1 3-3 3-2-2z";
const LAND_E = "M41 24l2-2 0-3 2-1 2 2 3-2 5-1 3 1 4 0 4 2 2 1-1 3-2 1-2 4-2 1-1 3 0 2-2-2-2-2-2 3-2-3-3-2-3 0-3-1-3 1zM41 29l4-1 4 2 3 3-1 3-2 2-1 4-2 2-2-1-1-6-2-3zM60 42l3-3 3 1 1 4-2 2-2-2-3 0zM58 36l3 2 2 1-2 0z";
const Ticks = () => (
  <path d="M17 15h3M17 21h3M17 27h3M17 33h3M17 39h3M17 45h3M65 15h3M65 19h3M65 23h3M65 27h3M65 31h3M65 35h3M65 39h3M65 45h3" stroke="#e2e2e2" strokeWidth="1" fill="none" />
);
const Num = ({ x, y, children, fill = "#777" }) => <text x={x} y={y} fontSize="5.500" fill={fill} className="font-['Liberation_Sans',Arial,sans-serif] tracking-[-0.3px]">{children}</text>;

const THUMBS = [
  <>
    <rect x="17" y="13" width="49" height="35" fill="#fff" stroke="#aaa" strokeWidth="1.500" />
    <Rects d={[[17.5, 13.5, 48, 9, "#dedede"], [17.5, 31.500, 48, 9, "#dedede"], [20, 17, 5, 2, "#999"], [20, 27, 6, 2, "#999"], [20, 36.500, 4, 2, "#999"]]} />
    <Num x={31} y={20.500}>1234</Num><Num x={48} y={20.500}>678</Num><Num x={31} y={29.500}>368</Num><Num x={48} y={29.500}>3034</Num>
    <Num x={31} y={38.500}>2620</Num><Num x={48} y={38.500}>2559</Num><Num x={31} y={46.500}>971</Num><Num x={48} y={46.500}>322</Num>
  </>,
  <Rects d={[[20, 17, 5, 2, "#bbb"], [20, 27, 6, 2, "#bbb"], [20, 37, 4, 2, "#bbb"], [28, 13.500, 7, 7, LG], [38, 13.500, 6, 6, O], [49, 13.500, 7, 7, G], [59, 13.500, 4, 4, LG], [28, 27, 7, 7, LG], [38, 27, 4, 4, LO], [49, 27, 6, 6, LG], [59, 27, 7, 7, LG], [28, 39, 9, 9, G], [38, 39, 8, 8, LG], [49, 39, 9, 9, G], [59, 39, 7, 7, LG]]} />,
  <>
    <rect x="17" y="13" width="49" height="35" fill="#fff" stroke="#ddd" strokeWidth="1.200" />
    <Rects d={[[28, 13.500, 19, 9, "#cbe5da"], [48, 13.500, 18, 9, "#e0f2e8"], [28, 24, 19, 9, "#fde8d3"], [48, 24, 18, 9, "#cbe5da"], [28, 34, 19, 9, "#e0f2e8"], [48, 34, 18, 9, "#e0f2e8"], [28, 44, 19, 4, "#cbe5da"], [48, 44, 18, 4, "#e0f2e8"], [20, 17, 5, 2, "#ddd"], [20, 27, 6, 2, "#ddd"], [20, 37, 4, 2, "#ddd"]]} />
    <path d="M28 13v35M47.500 13v35M28 23.300h38M28 33.500h38M28 43.500h38" stroke="#d5dcd8" />
    <Num x={30} y={20.500} fill="#bcd2c8">1234</Num><Num x={50} y={20.500} fill="#bcd2c8">546</Num><Num x={30} y={30.500} fill="#e6cfb8">368</Num><Num x={50} y={30.500} fill="#b4ccc0">310</Num><Num x={30} y={40.500} fill="#bcd2c8">2620</Num><Num x={50} y={40.500} fill="#bcd2c8">5399</Num>
  </>,
  <>
    <path d={LAND_W + LAND_E} fill="#f1f1f1" />
    <g fill="#f0bcc0">{[[18, 29, 2], [26, 26, 1.500], [31, 37, 1.600], [25, 35, 1.200], [38, 22, 1.500], [41, 25, 1.500], [37, 26, 1.500], [46, 32, 1.300], [55, 28, 2.600], [58, 31, 1.600], [60, 35, 2], [63, 40, 1.300], [51, 24, 1.200]].map(([x, y, r], n) => <circle key={n} cx={x} cy={y} r={r} />)}</g>
  </>,
  <><path d={LAND_E} fill="#ffdfdf" /><path d={LAND_W} fill="#f6cccb" /></>,
  <>
    <path d="M41.500 31V16.500A14.500 14.500 0 0 1 51.500 20.500z" fill="#ff9d9a" /><path d="M41.500 31L51.500 20.500A14.500 14.500 0 0 1 51.500 41.500z" fill={B} />
    <path d="M41.500 31L51.500 41.500A14.500 14.500 0 0 1 27 31z" fill={LB} /><path d="M41.500 31H27A14.500 14.500 0 0 1 41.500 16.500z" fill="#e15f56" />
  </>,
  <Rects d={[[19.500, 17, 24, 4, B], [19.500, 25, 44, 4, B], [19.500, 33, 12, 4, B], [19.500, 41, 35, 4, B]]} />,
  <Rects d={[[21, 17, 8, 7, B], [21, 24, 8, 22, LB], [32, 23, 8, 8, B], [32, 31, 8, 15, LB], [44, 20, 8, 19, B], [44, 39, 8, 7, LB], [56, 27, 8, 9, B], [56, 36, 8, 10, LB]]} />,
  <Rects d={[[19, 37, 4, 14, B], [24, 28, 4, 23, LB], [33, 11, 1, 40, "#bbb"], [38, 21, 4, 30, B], [43, 32, 4, 19, LB], [51, 11, 1, 40, "#bbb"], [56, 41, 4, 10, B], [61, 27, 4, 24, LB]]} />,
  <Rects d={[[19.500, 15.500, 21.500, 15, MB], [19.500, 31.500, 21.500, 14, B], [42, 15.500, 11, 10, MB], [54, 15.500, 10, 10, LB], [42, 26.500, 7, 10.500, "#ff9d9a"], [50, 26.500, 7, 10.500, MB], [58, 26.500, 6, 10.500, LB], [42, 38, 7, 7.500, "#e15f56"], [50, 38, 7, 7.500, LB], [58, 38, 6, 4, B], [58, 43, 6, 2.500, LB]]} />,
  <>
    {[[25, 21, MB], [25, 26, B], [25, 39.500, B], [42.500, 22, B], [42.500, 36, B], [42.500, 40, MB], [60.500, 22, MB], [60.500, 28.500, LB], [60.500, 44.500, LB]].map(([x, y, s], n) => <Ring key={n} x={x} y={y} s={s} />)}
    <path d="M38 52a4.600 4.600 0 0 1 9 0" fill="none" stroke={LB} strokeWidth="1.300" />
  </>,
  <>
    {[[23, 20, B], [23, 25, LB], [32.500, 24, B], [32.500, 36, LB], [23, 43, LB], [32.500, 45.500, B], [52.500, 20, LB], [62, 24, B], [62, 29, MB], [52.500, 39, B], [52.500, 43, LB], [62, 41.500, LB]].map(([x, y, s], n) => <Ring key={n} x={x} y={y} s={s} r={3.800} />)}
    <path d="M42 11v40" stroke="#bbb" />
  </>,
  <g fill="none" strokeWidth="1.600">
    <path d="M18.500 28.500l8 2.500 11-9 11 9 6 4.500 11-2" stroke="#fdeccd" /><path d="M18.500 21.500l7.500-6 11.500 15 9.500-8 7.500 7 11-5.500" stroke="#fddfc0" /><path d="M18.500 34.500l8 8.500 16-9 12 8.500 11-3" stroke="#cddbe8" />
  </g>,
  <g fill="none" strokeWidth="1.600">
    <path d="M18 27l7 1.500 6-7h7.500M46 26l6-7 6 4.500 8-2" stroke="#fddfc0" /><path d="M18 34l7-1.500 6-8 7 5M46 34l6-3 6 1 8-3" stroke="#fdeccd" /><path d="M18 40.500l7 2.500 6-6h7.500M46 41l6-4.500 6 2.500 8-3" stroke="#cddbe8" />
    <path d="M42.500 11v40" stroke="#ddd" strokeWidth="1" />
  </g>,
  <g fill="none" strokeWidth="1.600"><Ticks /><path d="M24 24l8.500-8 8 8 6-3.500 9 6.500 6-5" stroke="#fddfc0" /><path d="M24 33.500l8-4 7.500 10 6-5 10 6 5-8" stroke="#cddbe8" /></g>,
  <><path d="M17 31l12-13.500 20 14 17-5.500v23H17z" fill="#cddbe8" /><path d="M17 35l12-9.500 20 13 17-9v19H17z" fill="#fde4ca" /><path d="M17 42l12-5 20 6.500 17-4V49H17z" fill="#fef3e4" /></>,
  <>
    <path d="M17 31l6-13.500 9 13 9-5.500v24H17z" fill="#cddbe8" /><path d="M17 36l6-10 9 13 9-12v22H17z" fill="#fde4ca" /><path d="M17 42l6-5 9 6 9-4v10H17z" fill="#fef3e4" />
    <path d="M43 31l6-13.500 9 13 9-5.500v24H43z" fill="#cddbe8" /><path d="M43 36l6-10 9 13 9-12v22H43z" fill="#fde4ca" /><path d="M43 42l6-5 9 6 9-4v10H43z" fill="#fef3e4" />
  </>,
  <><Ticks /><Rects d={[[24, 32, 5, 17, "#cddbe8"], [32, 27, 5, 22, "#cddbe8"], [40, 36, 5, 13, "#cddbe8"], [48, 18, 5, 31, "#cddbe8"], [56, 31, 5, 18, "#cddbe8"]]} /><path d="M25 28l8-8 9 12 8-9 9 9" fill="none" stroke="#fddfc0" strokeWidth="1.600" /></>,
  <>
    {[[35.500, 21.500], [56.500, 23.500], [27.500, 31.500], [38.500, 35.500], [21.500, 43.500]].map(([x, y], n) => <Ring key={n} x={x} y={y} s="#f5a54a" r={3.600} />)}
    <path d="M49 12.500v9M44.500 17h9M45 23.500v9M40.500 28h9M60 30v9M55.500 34.500h9M49 35.500v9M44.500 40h9M31 36.500v9M26.500 41h9" stroke="#4aa183" strokeWidth="1.400" />
  </>,
  <Rects d={[[20, 46, 4, 3], [25, 41, 4, 8], [30, 32, 4, 17], [35, 22, 4, 27], [40, 18, 4, 31], [45, 22, 4, 27], [50, 32, 4, 17], [55, 41, 4, 8], [60, 46, 4, 3]].map((r) => [...r, "#cbe5da"])} />,
  <>
    <Rects d={[[21, 29, 7, 4, LG], [21, 33, 7, 7, G], [33, 24, 7, 9, LG], [33, 33, 7, 4, G], [45, 27, 7, 8, LG], [45, 35, 7, 7, G], [57, 22, 7, 12, LG], [57, 34, 7, 4, G]]} />
    <path d="M24.500 21v23M22 21h5M22 44h5M36.500 19v27M34 19h5M34 46h5M48.500 18v29M46 18h5M46 47h5M60.500 16v32M58 16h5M58 48h5" stroke="#333" strokeWidth="1.200" />
  </>,
  <Rects d={[[18, 14, 9, 8, "#cbe5da"], [34, 14, 4, 8, "#fbd9bd"], [39, 14, 4, 8, "#fde8d3"], [50, 14, 2, 8, "#fbd9bd"], [56, 14, 8, 8, "#fde8d3"], [18, 26, 6, 8, "#e0f2e8"], [25, 26, 3, 8, "#cbe5da"], [32, 26, 4, 8, "#cbe5da"], [39, 26, 14, 8, "#e0f2e8"], [58, 26, 8, 8, "#fbd9bd"], [18, 40, 2, 8, "#cbe5da"], [23, 40, 8, 8, "#fde8d3"], [33, 40, 2, 8, "#fbd9bd"], [37, 40, 4, 8, "#e0f2e8"], [47, 40, 7, 8, "#cbe5da"], [60, 40, 4, 8, "#fde8d3"]]} />,
  <Rects d={[[19, 15, 46, 8, "#f3f5f7"], [19, 15, 40, 8, "#e3e3e3"], [19, 17, 25, 4, G], [47, 15, 1.200, 8, "#222"], [19, 27, 46, 8, "#f3f5f7"], [19, 27, 34, 8, "#e3e3e3"], [19, 29, 40, 4, G], [54, 27, 1.200, 8, "#222"], [19, 40, 46, 8, "#f3f5f7"], [19, 40, 25, 8, "#e3e3e3"], [19, 42, 21, 4, G], [60, 40, 1.200, 8, "#222"]]} />,
  <>{[[29, 37, 9.500, LG], [30, 23.500, 3.500, G], [40, 20.500, 5, G], [49.500, 21.500, 3, LG], [59, 27, 7, LO], [45, 31, 5.700, LO], [54, 37, 3.700, O], [44, 44, 4, G]].map(([x, y, r, f], n) => <circle key={n} cx={x} cy={y} r={r} fill={f} />)}</>,
];

const ShowMe = () => (
  <div className="absolute left-[1609px] top-[64px] flex w-[305px] flex-col items-end drop-shadow-[2px_2px_2px_rgba(0,0,0,0.35)]">
    <div className="z-10 -mb-px flex h-[55px] w-[149px] items-center border border-b-0 border-[#d9d9d9] bg-[#fafafa] pb-[7px] pl-[14px]">
      <svg width="16" height="16" viewBox="0 0 16 16"><Rects d={[[1, 0, 11, 3, "#85719b"], [1, 4, 14, 3, "#7ca3cc"], [1, 8, 6, 3, "#f3a77a"], [1, 12, 8, 3, "#fb6e7c"]]} /></svg>
      <span className="ml-[6px] text-[19.500px] tracking-[0.600px] text-[#111]">Show Me</span>
    </div>
    <div className="h-[826px] w-full border border-[#d9d9d9] bg-[#fafafa] pl-[21px] pt-[21px]">
      <div className="grid grid-cols-[83px_83px_83px] gap-[7px]">
        {THUMBS.map((t, n) => (
          <div key={n} className={"h-[62px] bg-white " + (n === 18 ? "outline-[3px] -outline-offset-2 outline-[#e06a33]" : "border border-[#dcdcdc]")}>
            <svg width="83" height="62" viewBox="0 0 83 62" className={n === 18 ? "" : "-ml-px -mt-px"}>{t}</svg>
          </div>
        ))}
      </div>
      <div className="mt-[24px] text-[18px] leading-[26px] tracking-[0.480px] text-black">For <b>scatter plots</b> try</div>
      <div className="mt-[9px] flex h-[30px] items-center text-[18px] tracking-[0.350px] text-black">0 or more
        <span className="ml-[5px] flex h-[30px] w-[136px] items-center justify-center rounded-full bg-[#4996b2] pr-[6px] tracking-[0.500px] text-white">Dimensions</span>
      </div>
      <div className="mt-3 flex h-[30px] items-center text-[18px] tracking-[0.350px] text-black">2 to 4
        <span className="ml-[5px] flex h-[30px] w-[118px] items-center justify-center rounded-full bg-[#00b180] pr-[4px] tracking-[0.400px] text-white">Measures</span>
      </div>
    </div>
  </div>
);

/* ---------- bottom bars ---------- */

const Tab = ({ w, children }) => (
  <div className={"flex h-full shrink-0 items-center border-r border-[#c8c8c8] whitespace-nowrap " + w}>{children}</div>
);

const AddIcon = ({ children }) => (
  <svg width="18" height="18" viewBox="0 0 18 18" fill="none" stroke="#666" strokeWidth="1.200">
    {children}
    <path d="M9.500 13.500h7M13 10v7" stroke="#555" strokeWidth="2" />
  </svg>
);

const BottomTabs = () => (
  <div className="flex h-[46px] shrink-0 border-y border-[#c8c8c8] bg-[#e6e6e6] text-[18.500px] tracking-[0.080px] text-[#666]">
    <Tab w="w-[196px] pl-[12px] pt-px">
      <svg width="10" height="14" viewBox="0 0 10 14" fill="none" stroke="#555"><path d="M1.500 3v8c0 2 7 2 7 0V3M1.500 3c0-2 7-2 7 0s-7 2-7 0z" /></svg>
      <span className="ml-[6px]">Data Source</span>
    </Tab>
    <Tab w="w-[157px] pl-[9px] pt-px">Customer Sales</Tab>
    <Tab w="w-[121px] pl-[8px] pt-px">Profit Chart</Tab>
    <Tab w="w-[150px] bg-[#fafafa] pl-[8px] tracking-[0.300px] font-bold text-[#555]">Sales Pie Chart</Tab>
    <Tab w="w-[200px] pl-[8px] pt-px">Cusine Sales &amp; Profit</Tab>
    <Tab w="w-[148px] pl-[9px] pt-px">
      <svg width="12" height="12" viewBox="0 0 12 12" fill="none" stroke="#555" strokeWidth="1.200"><path d="M1 1h10v10H1zM6 1v10M1 6h10" /></svg>
      <span className="ml-[6px]">Dashboard 1</span>
    </Tab>
    <Tab w="w-[32px] justify-center"><AddIcon><path d="M9 12.500H2v-11h11v7M5 10V7M7.500 10V5M10 9V6" /></AddIcon></Tab>
    <Tab w="w-[32px] justify-center"><AddIcon><path d="M9 12.500H2v-11h11v7M7.500 1.500v11M2 7h11" /></AddIcon></Tab>
    <Tab w="w-[32px] justify-center"><AddIcon><path d="M2 1.500L5.500 3.500h4L13 1.500v7M2 1.500v10l3.500 1.500h3M5.500 3.500V13M9.500 3.500V9" /></AddIcon></Tab>
  </div>
);

const StatusBar = () => (
  <div className="flex h-4 shrink-0 overflow-hidden bg-[#ebebeb] text-[17.500px] leading-[35px] text-[#222]">
    <span className="w-[117px] shrink-0 pl-[5px]">1000 marks</span>
    <span className="w-[160px] shrink-0 pl-[5px] tracking-[-0.350px]">1 row by 1 column</span>
    <span className="w-[1159px] shrink-0 pl-[5px]">SUM(Sales): 4,631,847.0</span>
    <div className="w-[189px] shrink-0 border-l border-[#c8c8c8]" />
    <div className="w-[39px] shrink-0 border-l border-[#c8c8c8]" />
    <div className="w-[39px] shrink-0 border-l border-[#c8c8c8]" />
    <div className="w-[69px] shrink-0 border-l border-[#c8c8c8]" />
    <div className="w-[73px] shrink-0 border-l border-[#c8c8c8]">
      <svg width="72" height="16" viewBox="0 0 72 16" fill="#b5b5b5"><path d="M9 11h1v5H9zM15 11v5h-5zM30 11v5h-5zM42 11v5h5zM57 11v5h5zM62 11h1v5h-1z" /></svg>
    </div>
    <div className="grow border-l border-[#c8c8c8]">
      <svg width="72" height="16" viewBox="0 0 72 16" fill="#b5b5b5"><path d="M10 9h3v3h-3zM14 9h3v3h-3zM18 9h3v3h-3zM10 13h3v3h-3zM14 13h3v3h-3zM18 13h3v3h-3zM33 9h11v7H33z" /><path d="M56 9h10v7H56z" fill="#5a5a5a" /></svg>
    </div>
  </div>
);

const SheetPreview = () => (
  <div className="absolute left-[473px] top-[625px] h-[300px] w-[300px] border border-[#6f7f8d] bg-white">
    <svg width="298" height="298" viewBox="474 626 298 298">
      {MARKS.map(([x, y, c], n) => (
        <circle key={n} cx={PX + (x - OX) * TX} cy={PY + (y - OY) * TY} r="4.250" fill={PALETTE[c]} />
      ))}
    </svg>
  </div>
);

export default function App() {
  return (
    <div className="relative flex h-[985px] w-[1918px] flex-col overflow-hidden bg-[#f4f4f4] font-[Roboto,'Liberation_Sans',sans-serif]">
      <TitleBar />
      <MenuBar />
      <Toolbar />
      <div className="flex h-[806px] shrink-0 gap-2">
        <DataPane />
        <MarksColumn />
        <Center />
        <DataGuide />
      </div>
      <BottomTabs />
      <StatusBar />
      <SheetPreview />
      <ShowMe />
    </div>
  );
}
